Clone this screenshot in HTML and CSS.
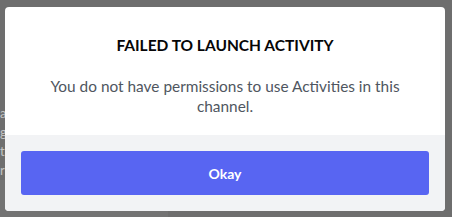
FILE: index.html
```html
<!DOCTYPE html>
<html lang="en">
<head>
    <meta charset="UTF-8">
    <title>Failed to launch activity</title>
    <link rel="stylesheet" href="styles.css">
</head>
<body>
    <div class="backdrop">
        <div class="bg-text">
            <p>a</p>
            <p>g</p>
            <p>t</p>
            <p>r</p>
        </div>
        <div class="bg-strip"></div>
    </div>

    <div class="modal">
        <div class="modal-body">
            <h2 class="title">FAILED TO LAUNCH ACTIVITY</h2>
            <p class="message">You do not have permissions to use Activities in this channel.</p>
        </div>
        <div class="modal-footer">
            <button class="btn">Okay</button>
        </div>
    </div>
</body>
</html>
```

FILE: styles.css
```css
html, body {
    margin: 0;
    height: 100%;
}
body {
    background-color: #6e6e6e;
    font-family: Lato, "Noto Sans", sans-serif;
    overflow: hidden;
    position: relative;
}
.backdrop {
    height: 100%;
    display: flex;
    flex-direction: column;
    justify-content: flex-end;
}
.bg-text {
    padding-top: 104px;
    color: #c4c4c4;
    font-size: 13px;
}
.bg-text p {
    margin: 0;
    height: 19px;
    line-height: 19px;
}
.bg-strip {
    flex: 1;
    width: 168px;
    background-color: #737373;
}
.modal {
    position: absolute;
    top: 7px;
    left: 5px;
    width: 440px;
    background-color: #fff;
    border-radius: 4px;
    overflow: hidden;
}
.modal-body {
    padding: 29px 16px 19px;
    text-align: center;
}
.title {
    margin: 0;
    font-size: 15.5px;
    font-weight: 700;
    line-height: 18px;
    color: #060607;
}
.message {
    margin: 22px 0 0;
    font-size: 15.4px;
    line-height: 20px;
    color: #4f5660;
}
.modal-footer {
    background-color: #f2f3f5;
    padding: 16px;
}
.btn {
    display: block;
    width: 100%;
    height: 44px;
    border: none;
    border-radius: 3px;
    background-color: #5865f2;
    color: #fff;
    font-family: inherit;
    font-size: 14px;
    font-weight: 700;
    cursor: pointer;
}
```
